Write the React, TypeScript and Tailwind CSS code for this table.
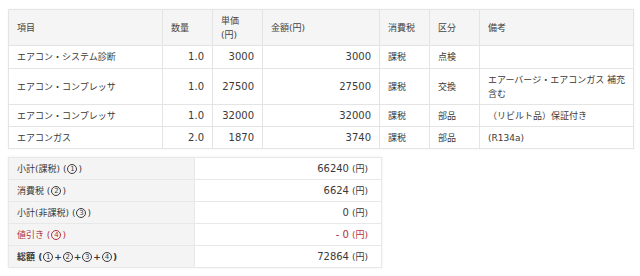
import type { ReactNode } from 'react';

const FONT = "font-['DejaVu_Sans','Noto_Sans_CJK_JP',sans-serif]";

type Item = {
  name: string;
  qty: string;
  unit: string;
  amount: string;
  tax: string;
  kind: string;
  note: ReactNode;
  tall?: boolean;
};

const ITEMS: Item[] = [
  { name: 'エアコン・システム診断', qty: '1.0', unit: '3000', amount: '3000', tax: '課税', kind: '点検', note: '' },
  {
    name: 'エアコン・コンプレッサ',
    qty: '1.0',
    unit: '27500',
    amount: '27500',
    tax: '課税',
    kind: '交換',
    note: (
      <>
        エアーバージ・エアコンガス 補充
        <br />
        含む
      </>
    ),
    tall: true,
  },
  { name: 'エアコン・コンプレッサ', qty: '1.0', unit: '32000', amount: '32000', tax: '課税', kind: '部品', note: '（リビルト品）保証付き' },
  { name: 'エアコンガス', qty: '2.0', unit: '1870', amount: '3740', tax: '課税', kind: '部品', note: '(R134a)' },
];

// circled number, drawn as a small ring
function C({ n }: { n: number }) {
  return (
    <span className="mx-[1px] inline-block size-[10px] rounded-full border border-current text-center align-middle text-[7px] leading-[8px] font-normal">
      {n}
    </span>
  );
}

const SUMMARY: { label: ReactNode; value: string; tone: string }[] = [
  { label: <>小計(課税) (<C n={1} />)</>, value: '66240', tone: 'normal' },
  { label: <>消費税 (<C n={2} />)</>, value: '6624', tone: 'normal' },
  { label: <>小計(非課税) (<C n={3} />)</>, value: '0', tone: 'normal' },
  { label: <>値引き (<C n={4} />)</>, value: '- 0', tone: 'red' },
  {
    label: (
      <>
        総額 (<C n={1} />+<C n={2} />+<C n={3} />+<C n={4} />)
      </>
    ),
    value: '72864',
    tone: 'bold',
  },
];

const th = 'border border-[#e4e4e4] bg-[#f5f5f5] px-2 text-left align-middle font-normal text-[#444]';
const td = 'border border-[#e4e4e4] px-2 align-middle';

export default function App() {
  return (
    <div className={`${FONT} h-[276px] w-[640px] bg-white pl-2 pt-[9px] text-[9px] leading-[14px] text-[#3a3a3a]`}>
      <table className="w-[625px] table-fixed border-collapse shadow-[0_0_2px_rgba(0,0,0,0.06)]">
        <colgroup>
          <col className="w-[154px]" />
          <col className="w-[50px]" />
          <col className="w-[50px]" />
          <col className="w-[117px]" />
          <col className="w-[50px]" />
          <col className="w-[50px]" />
          <col className="w-[154px]" />
        </colgroup>
        <thead>
          <tr className="h-[36px]">
            <th className={th}>項目</th>
            <th className={th}>数量</th>
            <th className={th}>
              単価
              <br />
              (円)
            </th>
            <th className={th}>金額(円)</th>
            <th className={th}>消費税</th>
            <th className={th}>区分</th>
            <th className={th}>備考</th>
          </tr>
        </thead>
        <tbody>
          {ITEMS.map((it, i) => (
            <tr key={i} className={it.tall ? 'h-[36px]' : i === 0 ? 'h-[23px]' : 'h-[22px]'}>
              <td className={td}>{it.name}</td>
              <td className={`${td} text-right text-[10px]`}>{it.qty}</td>
              <td className={`${td} text-right text-[10px]`}>{it.unit}</td>
              <td className={`${td} text-right text-[10px]`}>{it.amount}</td>
              <td className={td}>{it.tax}</td>
              <td className={td}>{it.kind}</td>
              <td className={`${td} pr-0 whitespace-nowrap`}>{it.note}</td>
            </tr>
          ))}
        </tbody>
      </table>

      <table className="mt-[8px] w-[373px] table-fixed border-collapse shadow-[0_0_2px_rgba(0,0,0,0.08)]">
        <colgroup>
          <col className="w-[186px]" />
          <col className="w-[187px]" />
        </colgroup>
        <tbody>
          {SUMMARY.map((s, i) => {
            const color = s.tone === 'red' ? 'text-[#b5313a]' : '';
            return (
              <tr key={i} className="h-[22px]">
                <td
                  className={`border border-[#e8e8e8] bg-[#f4f4f4] px-2 ${color} ${
                    s.tone === 'bold' ? 'font-bold' : ''
                  }`}
                >
                  {s.label}
                </td>
                <td className={`border border-[#e8e8e8] pr-[13px] text-right ${color}`}>
                  <span className="text-[10px]">{s.value}</span>
                  <span className="ml-[3px]">(円)</span>
                </td>
              </tr>
            );
          })}
        </tbody>
      </table>
    </div>
  );
}
